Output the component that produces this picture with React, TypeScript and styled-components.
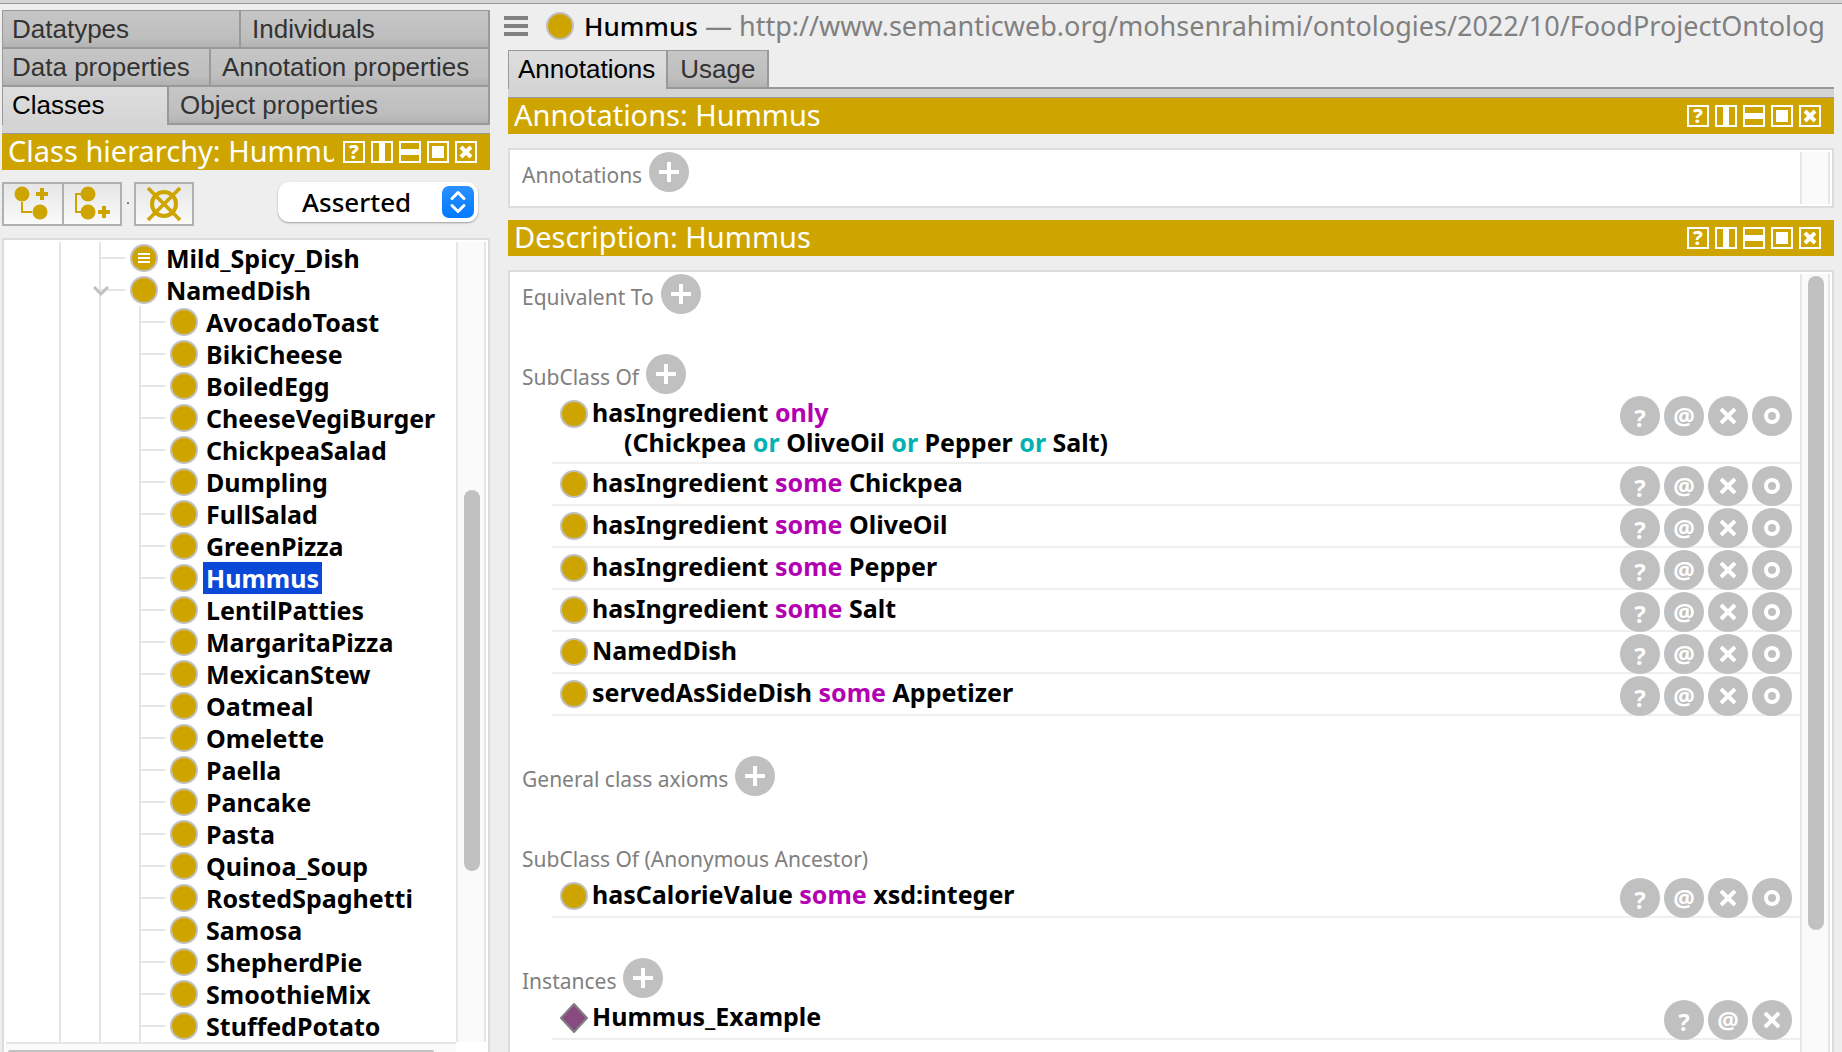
import React from "react";
import styled, { createGlobalStyle, css } from "styled-components";

const gold = "#cea500";
const uiFont = `"Noto Sans", "Open Sans", sans-serif`;
const tabFont = `"Liberation Sans", Arial, sans-serif`;

const GlobalStyle = createGlobalStyle`
  * { box-sizing: border-box; }
  body { margin: 0; background: #eeeeee; font-family: ${uiFont}; }
  button, select { font-family: inherit; margin: 0; }
  ul, h1, h2, h3 { margin: 0; padding: 0; list-style: none; font-weight: 400; }
`;

const Page = styled.div`
  display: flex;
  flex-direction: column;
  height: 100vh;
  overflow: hidden;
  background: #eeeeee;
`;

const TopEdge = styled.div`
  flex: none;
  height: 4px;
  background: #d5d5d5;
  border-bottom: 1px solid #979797;
`;

const Workspace = styled.div`
  display: flex;
  flex: 1;
  min-height: 0;
`;

const Sidebar = styled.aside`
  display: flex;
  flex-direction: column;
  flex: 0 0 490px;
  min-width: 0;
  padding: 6px 0 0 2px;
`;

const Main = styled.main`
  display: flex;
  flex-direction: column;
  flex: 1;
  min-width: 0;
  padding-left: 18px;
`;

const MainBody = styled.div`
  display: flex;
  flex-direction: column;
  flex: 1;
  min-height: 0;
  padding-right: 8px;
`;

/* ---------- tabs ---------- */

const TabRows = styled.div`
  border-top: 1px solid #999999;
`;

const TabRow = styled.div`
  display: flex;
  height: 38px;
`;

const Tab = styled.button<{ $active?: boolean; $width?: number }>`
  flex: ${(p) => (p.$width ? `0 0 ${p.$width}px` : "1")};
  height: 38px;
  padding: 0 11px;
  border: 0 solid #999999;
  border-right-width: 2px;
  border-bottom-width: 2px;
  font: 26px/36px ${tabFont};
  text-align: left;
  white-space: nowrap;
  color: #333333;
  background: linear-gradient(#c6c6c6, #bebebe 75%, #b2b2b2);
  &:first-child {
    padding-left: 9px;
    border-left-width: 1px;
  }
  ${(p) =>
    p.$active &&
    css`
      color: #000000;
      background: linear-gradient(#dedede, #d4d4d4);
      border-bottom-width: 0;
      padding-bottom: 2px;
    `}
`;

const TabBase = styled.div`
  flex: none;
  height: 9px;
  background: #d4d4d4;
  border-bottom: 1px solid #999999;
`;

const ViewTabs = styled.div`
  display: flex;
  flex: none;
  height: 39px;
  border-bottom: 2px solid #999999;
`;

const ViewTab = styled.button<{ $active?: boolean }>`
  height: ${(p) => (p.$active ? 39 : 37)}px;
  padding: ${(p) => (p.$active ? "0 11px 2px 9px" : "0 12px")};
  border: solid #999999;
  border-width: 1px 2px 0 ${(p) => (p.$active ? 1 : 0)}px;
  font: 26px/36px ${tabFont};
  color: ${(p) => (p.$active ? "#000000" : "#333333")};
  background: ${(p) =>
    p.$active
      ? "linear-gradient(#dedede, #d4d4d4)"
      : "linear-gradient(#c6c6c6, #bebebe 75%, #b2b2b2)"};
`;

/* ---------- view header ---------- */

const HeaderBar = styled.header`
  display: flex;
  align-items: center;
  flex: none;
  height: 36px;
  padding: 0 13px 0 6px;
  background: ${gold};
  color: #ffffff;
`;

const HeaderTitle = styled.h2`
  flex: 1;
  min-width: 0;
  padding-bottom: 2px;
  overflow: hidden;
  font-size: 29px;
  line-height: 34px;
  white-space: nowrap;
`;

const HeaderTools = styled.div`
  display: flex;
  gap: 6px;
  margin-left: 9px;
`;

const HeaderButton = styled.button`
  display: flex;
  align-items: center;
  justify-content: center;
  width: 22px;
  height: 22px;
  padding: 0;
  border: 2px solid #ffffff;
  background: transparent;
  color: #ffffff;
  font-size: 20px;
  font-weight: 800;
  line-height: 18px;
`;

const Glyph = ({ children }: { children: React.ReactNode }) => (
  <svg width="18" height="18" viewBox="0 0 18 18" fill="#ffffff" aria-hidden="true">
    {children}
  </svg>
);

function ViewHeader({ title }: { title: string }) {
  return (
    <HeaderBar>
      <HeaderTitle>{title}</HeaderTitle>
      <HeaderTools>
        <HeaderButton>?</HeaderButton>
        <HeaderButton aria-label="Split vertically">
          <Glyph><rect x="6" y="0" width="6" height="18" /></Glyph>
        </HeaderButton>
        <HeaderButton aria-label="Split horizontally">
          <Glyph><rect x="0" y="6" width="18" height="6" /></Glyph>
        </HeaderButton>
        <HeaderButton aria-label="Float">
          <Glyph><rect x="3" y="3" width="12" height="12" /></Glyph>
        </HeaderButton>
        <HeaderButton aria-label="Close">
          <Glyph><path d="M4 4L14 14M14 4L4 14" stroke="#ffffff" strokeWidth="4" /></Glyph>
        </HeaderButton>
      </HeaderTools>
    </HeaderBar>
  );
}

/* ---------- toolbar ---------- */

const Toolbar = styled.div`
  display: flex;
  align-items: flex-start;
  flex: none;
  height: 68px;
  padding: 12px 12px 0 0;
`;

const ToolButton = styled.button`
  width: 60px;
  height: 44px;
  padding: 0;
  border: 2px solid #b0b0b0;
  background: linear-gradient(#e6e6e6, #fafafa);
  &:first-child {
    width: 62px;
  }
  & + & {
    margin-left: -2px;
  }
  svg {
    display: block;
  }
`;

const ToolSeparator = styled.span`
  width: 2px;
  height: 2px;
  margin: 20px 5px 0;
  background: #808080;
`;

const SelectWrap = styled.label`
  position: relative;
  flex: 0 0 200px;
  height: 40px;
  margin-left: auto;
  svg {
    position: absolute;
    top: 4px;
    right: 4px;
    pointer-events: none;
  }
`;

const Select = styled.select`
  width: 100%;
  height: 40px;
  padding: 0 40px 0 24px;
  border: 0;
  border-radius: 11px;
  appearance: none;
  background: #ffffff;
  box-shadow: 0 1px 2px rgba(0, 0, 0, 0.35);
  color: #000000;
  font-size: 26px;
  font-weight: 500;
  line-height: 40px;
`;

/* ---------- tree ---------- */

const TreeBox = styled.div`
  display: flex;
  flex-direction: column;
  flex: 1;
  min-height: 0;
  padding: 2px 2px 0;
  border: 2px solid #dcdcdc;
  border-bottom: 0;
  background: #ffffff;
`;

const TreeBody = styled.div`
  display: flex;
  flex: 1;
  min-height: 0;
  overflow: hidden;
`;

const Tree = styled.ul`
  flex: 1;
  min-width: 0;
  padding-left: 53px;
`;

const TreeRow = styled.li`
  display: flex;
  align-items: center;
  height: 32px;
`;

const Guide = styled.span`
  flex: none;
  width: 40px;
  height: 32px;
  border-left: 2px solid #e5e5e5;
`;

const Branch = styled.span`
  position: relative;
  flex: none;
  width: 31px;
  height: 32px;
  padding: 15px 5px 15px 0;
  border-left: 2px solid #e5e5e5;
  background: #e5e5e5 content-box;
  svg {
    position: absolute;
    top: 12px;
    left: -8px;
  }
`;

const TreeName = styled.span<{ $selected?: boolean }>`
  height: 32px;
  margin-left: 5px;
  padding: 0 3px;
  font-size: 25px;
  font-weight: 700;
  line-height: 32px;
  white-space: nowrap;
  color: ${(p) => (p.$selected ? "#ffffff" : "#000000")};
  background: ${(p) => (p.$selected ? "#0a49d8" : "transparent")};
`;

const Dot = styled.span`
  display: flex;
  align-items: center;
  justify-content: center;
  flex: none;
  width: 28px;
  height: 28px;
  border: 2px solid #c0c0c0;
  border-radius: 50%;
  background: ${gold};
`;

const ScrollTrack = styled.div`
  flex: none;
  width: 30px;
  padding: 0 4px 0 6px;
  border: solid #e6e6e6;
  border-width: 0 2px;
  background: #fafafa;
`;

const ScrollThumb = styled.div<{ $top: string; $size: string }>`
  position: relative;
  top: ${(p) => p.$top};
  width: 16px;
  height: ${(p) => p.$size};
  border-radius: 8px;
  background: #c1c1c1;
`;

const BottomTrack = styled.div`
  flex: none;
  height: 10px;
  margin-right: 30px;
  padding: 6px 22px 0 2px;
  border-top: 2px solid #e6e6e6;
  background: #fafafa;
`;

const BottomThumb = styled.div`
  height: 2px;
  border-radius: 2px 2px 0 0;
  background: #c1c1c1;
`;

const dishes = [
  "AvocadoToast", "BikiCheese", "BoiledEgg", "CheeseVegiBurger", "ChickpeaSalad",
  "Dumpling", "FullSalad", "GreenPizza", "Hummus", "LentilPatties", "MargaritaPizza",
  "MexicanStew", "Oatmeal", "Omelette", "Paella", "Pancake", "Pasta", "Quinoa_Soup",
  "RostedSpaghetti", "Samosa", "ShepherdPie", "SmoothieMix", "StuffedPotato",
];

/* ---------- entity title ---------- */

const EntityBar = styled.div`
  display: flex;
  align-items: center;
  flex: none;
  height: 46px;
  padding: 0 0 2px;
  margin-left: -4px;
`;

const MenuButton = styled.button`
  flex: none;
  width: 24px;
  height: 20px;
  margin-right: 18px;
  padding: 0;
  border: 0;
  background: none;
  svg {
    display: block;
  }
`;

const EntityTitle = styled.h1`
  min-width: 0;
  margin-left: 10px;
  overflow: hidden;
  color: #808080;
  font-size: 27px;
  line-height: 40px;
  white-space: nowrap;
  strong {
    color: #000000;
    font-size: 26px;
    font-weight: 500;
  }
`;

/* ---------- panels ---------- */

const Panel = styled.section<{ $fill?: boolean }>`
  display: flex;
  flex: ${(p) => (p.$fill ? "1" : "none")};
  min-height: ${(p) => (p.$fill ? "0" : "60px")};
  margin: ${(p) => (p.$fill ? "14px 0 0" : "14px 0 12px")};
  padding: ${(p) => (p.$fill ? "2px 2px 0 0" : "2px 2px 2px 0")};
  border: 2px solid #dcdcdc;
  border-bottom-width: ${(p) => (p.$fill ? 0 : 2)}px;
  background: #ffffff;
`;

const PanelContent = styled.div`
  flex: 1;
  min-width: 0;
  overflow: hidden;
`;

const Group = styled.div`
  & + & {
    margin-top: 40px;
  }
`;

const GroupHead = styled.div`
  display: flex;
  align-items: center;
  gap: 7px;
  height: 40px;
  padding-left: 12px;
`;

const GroupLabel = styled.h3`
  padding-top: 6px;
  color: #808080;
  font-size: 21px;
  line-height: 28px;
  white-space: nowrap;
`;

const RoundButton = styled.button`
  display: flex;
  align-items: center;
  justify-content: center;
  flex: none;
  width: 40px;
  height: 40px;
  padding: 0;
  border: 0;
  border-radius: 50%;
  background: #c0c0c0;
  color: #ffffff;
  font-size: 24px;
  font-weight: 700;
  line-height: 36px;
`;

const QuestionButton = styled(RoundButton)`
  padding-top: 4px;
`;

const AxiomRow = styled.li`
  display: flex;
  align-items: flex-start;
  min-height: 42px;
  margin-left: 42px;
  padding: 0 8px 0 8px;
  background: linear-gradient(#efefef, #efefef) bottom / 100% 2px no-repeat;
`;

const IconSlot = styled.span`
  display: flex;
  flex: none;
  width: 28px;
  height: 28px;
  margin-top: 6px;
  svg {
    flex: none;
    margin: -2px;
  }
`;

const AxiomText = styled.div`
  flex: 1;
  min-width: 0;
  margin: 3px 0 0 4px;
  font-size: 25px;
  font-weight: 700;
  line-height: 30px;
  white-space: nowrap;
`;

const AxiomBody = styled.div`
  padding: 0 0 7px 32px;
`;

const RowTools = styled.div`
  display: flex;
  gap: 4px;
  padding-top: 2px;
`;

const Quantifier = styled.span`
  color: #b200b2;
`;

const Connective = styled.span`
  color: #00b2b2;
`;

const AddButton = ({ label }: { label: string }) => (
  <RoundButton aria-label={`Add ${label}`}>
    <svg width="20" height="20" viewBox="0 0 20 20" aria-hidden="true">
      <path d="M10 0V20M0 10H20" stroke="#ffffff" strokeWidth="4" />
    </svg>
  </RoundButton>
);

function Axiom({ individual, children }: { individual?: boolean; children: React.ReactNode }) {
  return (
    <AxiomRow>
      <IconSlot>
        {individual ? (
          <svg width="32" height="32" viewBox="0 0 32 32" aria-hidden="true">
            <path d="M16 2L29 16L16 30L3 16Z" fill="#874b82" stroke="#808080" strokeWidth="2" strokeLinejoin="round" />
          </svg>
        ) : (
          <Dot />
        )}
      </IconSlot>
      <AxiomText>{children}</AxiomText>
      <RowTools>
        <QuestionButton>?</QuestionButton>
        <RoundButton>@</RoundButton>
        <RoundButton aria-label="Delete">
          <svg width="18" height="18" viewBox="0 0 18 18" aria-hidden="true">
            <path d="M2 2L16 16M16 2L2 16" stroke="#ffffff" strokeWidth="4" />
          </svg>
        </RoundButton>
        {!individual && (
          <RoundButton aria-label="Edit">
            <svg width="16" height="16" viewBox="0 0 16 16" aria-hidden="true">
              <circle cx="8" cy="8" r="6" fill="none" stroke="#ffffff" strokeWidth="4" />
            </svg>
          </RoundButton>
        )}
      </RowTools>
    </AxiomRow>
  );
}

const Some = () => <Quantifier>some</Quantifier>;
const Or = () => <Connective>or</Connective>;

export default function App() {
  return (
    <Page>
      <GlobalStyle />
      <TopEdge />
      <Workspace>
        <Sidebar>
          <TabRows>
            <TabRow>
              <Tab $width={239}>Datatypes</Tab>
              <Tab>Individuals</Tab>
            </TabRow>
            <TabRow>
              <Tab $width={209}>Data properties</Tab>
              <Tab>Annotation properties</Tab>
            </TabRow>
            <TabRow>
              <Tab $active $width={167}>Classes</Tab>
              <Tab>Object properties</Tab>
            </TabRow>
          </TabRows>
          <TabBase />
          <ViewHeader title="Class hierarchy: Hummus" />
          <Toolbar>
            <ToolButton aria-label="Add subclass">
              <svg width="58" height="40" viewBox="0 0 58 40" fill={gold}>
                <path d="M18 18V28H28" fill="none" stroke={gold} strokeWidth="2" />
                <circle cx="18" cy="10" r="7.5" />
                <circle cx="36" cy="28" r="7.5" />
                <path d="M38 4V16M32 10H44" stroke={gold} strokeWidth="4" />
              </svg>
            </ToolButton>
            <ToolButton aria-label="Add sibling class">
              <svg width="56" height="40" viewBox="0 0 56 40" fill={gold}>
                <path d="M18 10H12V28H18" fill="none" stroke={gold} strokeWidth="2" />
                <circle cx="24" cy="10" r="7.5" />
                <circle cx="24" cy="28" r="7.5" />
                <path d="M40 22V34M34 28H46" stroke={gold} strokeWidth="4" />
              </svg>
            </ToolButton>
            <ToolSeparator />
            <ToolButton aria-label="Delete class">
              <svg width="56" height="40" viewBox="0 0 56 40">
                <g fill="none" stroke={gold} strokeWidth="4">
                  <circle cx="28" cy="20" r="12" />
                  <path d="M12 4L44 36M44 4L12 36" strokeWidth="3.6" />
                </g>
              </svg>
            </ToolButton>
            <SelectWrap>
              <Select aria-label="Hierarchy mode" defaultValue="Asserted">
                <option>Asserted</option>
                <option>Inferred</option>
              </Select>
              <svg width="32" height="32" viewBox="0 0 32 32" aria-hidden="true">
                <defs>
                  <linearGradient id="blue" x1="0" y1="0" x2="0" y2="1">
                    <stop offset="0" stopColor="#2b90ff" />
                    <stop offset="1" stopColor="#007aff" />
                  </linearGradient>
                </defs>
                <rect width="32" height="32" rx="7" fill="url(#blue)" />
                <path d="M10 12.500L16 6.500L22 12.500M10 19.500L16 25.500L22 19.500" fill="none" stroke="#ffffff" strokeWidth="3" strokeLinecap="round" strokeLinejoin="round" />
              </svg>
            </SelectWrap>
          </Toolbar>
          <TreeBox>
            <TreeBody>
              <Tree>
                <TreeRow>
                  <Guide />
                  <Branch />
                  <Dot>
                    <svg width="12" height="10" viewBox="0 0 12 10" aria-hidden="true">
                      <path d="M0 1H12M0 5H12M0 9H12" stroke="#ffffff" strokeWidth="2" />
                    </svg>
                  </Dot>
                  <TreeName>Mild_Spicy_Dish</TreeName>
                </TreeRow>
                <TreeRow>
                  <Guide />
                  <Branch>
                    <svg width="16" height="12" viewBox="0 0 16 12" aria-hidden="true">
                      <path d="M1 1L8 8L15 1" fill="none" stroke="#c0c0c0" strokeWidth="3" />
                    </svg>
                  </Branch>
                  <Dot />
                  <TreeName>NamedDish</TreeName>
                </TreeRow>
                {dishes.map((name) => (
                  <TreeRow key={name}>
                    <Guide />
                    <Guide />
                    <Branch />
                    <Dot />
                    <TreeName $selected={name === "Hummus"}>{name}</TreeName>
                  </TreeRow>
                ))}
              </Tree>
              <ScrollTrack>
                <ScrollThumb $top="31%" $size="47.6%" />
              </ScrollTrack>
            </TreeBody>
            <BottomTrack>
              <BottomThumb />
            </BottomTrack>
          </TreeBox>
        </Sidebar>

        <Main>
          <EntityBar>
            <MenuButton aria-label="Menu">
              <svg width="24" height="20" viewBox="0 0 24 20" fill="#808080">
                <path d="M0 0H24V4H0ZM0 8H24V12H0ZM0 16H24V20H0Z" />
              </svg>
            </MenuButton>
            <Dot />
            <EntityTitle>
              <strong>Hummus</strong> — http://www.semanticweb.org/mohsenrahimi/ontologies/2022/10/FoodProjectOntolog
            </EntityTitle>
          </EntityBar>
          <MainBody>
            <ViewTabs>
              <ViewTab $active>Annotations</ViewTab>
              <ViewTab>Usage</ViewTab>
            </ViewTabs>
            <TabBase />
            <ViewHeader title="Annotations: Hummus" />
            <Panel>
              <PanelContent>
                <GroupHead>
                  <GroupLabel>Annotations</GroupLabel>
                  <AddButton label="annotation" />
                </GroupHead>
              </PanelContent>
              <ScrollTrack />
            </Panel>
            <ViewHeader title="Description: Hummus" />
            <Panel $fill>
              <PanelContent>
                <Group>
                  <GroupHead>
                    <GroupLabel>Equivalent To</GroupLabel>
                    <AddButton label="equivalent class" />
                  </GroupHead>
                </Group>
                <Group>
                  <GroupHead>
                    <GroupLabel>SubClass Of</GroupLabel>
                    <AddButton label="superclass" />
                  </GroupHead>
                  <ul>
                    <Axiom>
                      hasIngredient <Quantifier>only</Quantifier>
                      <AxiomBody>
                        (Chickpea <Or /> OliveOil <Or /> Pepper <Or /> Salt)
                      </AxiomBody>
                    </Axiom>
                    <Axiom>hasIngredient <Some /> Chickpea</Axiom>
                    <Axiom>hasIngredient <Some /> OliveOil</Axiom>
                    <Axiom>hasIngredient <Some /> Pepper</Axiom>
                    <Axiom>hasIngredient <Some /> Salt</Axiom>
                    <Axiom>NamedDish</Axiom>
                    <Axiom>servedAsSideDish <Some /> Appetizer</Axiom>
                  </ul>
                </Group>
                <Group>
                  <GroupHead>
                    <GroupLabel>General class axioms</GroupLabel>
                    <AddButton label="general class axiom" />
                  </GroupHead>
                </Group>
                <Group>
                  <GroupHead>
                    <GroupLabel>SubClass Of (Anonymous Ancestor)</GroupLabel>
                  </GroupHead>
                  <ul>
                    <Axiom>hasCalorieValue <Some /> xsd:integer</Axiom>
                  </ul>
                </Group>
                <Group>
                  <GroupHead>
                    <GroupLabel>Instances</GroupLabel>
                    <AddButton label="instance" />
                  </GroupHead>
                  <ul>
                    <Axiom individual>Hummus_Example</Axiom>
                  </ul>
                </Group>
              </PanelContent>
              <ScrollTrack>
                <ScrollThumb $top="2px" $size="84%" />
              </ScrollTrack>
            </Panel>
          </MainBody>
        </Main>
      </Workspace>
    </Page>
  );
}
